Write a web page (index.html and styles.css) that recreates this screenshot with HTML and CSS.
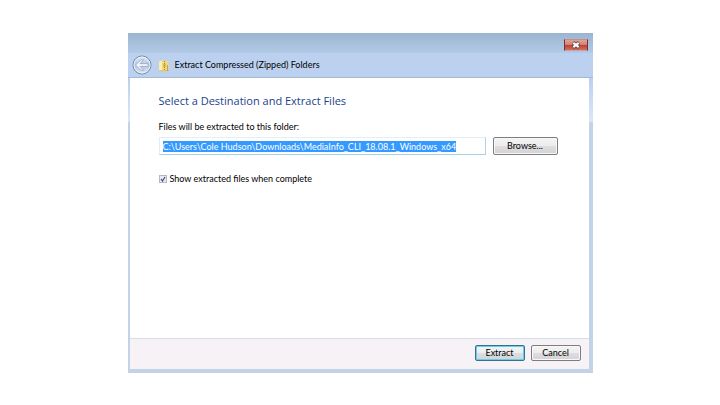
FILE: index.html
```
<!DOCTYPE html>
<html lang="en">
<head>
    <meta charset="UTF-8">
    <meta name="viewport" content="width=device-width, initial-scale=1.0">
    <title>Extract Compressed (Zipped) Folders</title>
    <link rel="stylesheet" href="styles.css">
</head>
<body>
    <form class="window" id="extractForm">
        <header class="frame-top">
            <div class="caption">
                <button type="button" class="close" aria-label="Close">
                    <svg width="10" height="8" viewBox="0 0 10 8">
                        <path d="M2 1.5 L8 6.5 M8 1.5 L2 6.5" stroke="#6b3a3a" stroke-width="3.6"/>
                        <path d="M2.3 1.8 L7.7 6.2 M7.7 1.8 L2.3 6.2" stroke="#fff" stroke-width="2.2"/>
                    </svg>
                </button>
            </div>
            <div class="nav">
                <button type="button" class="back" aria-label="Back">
                    <svg width="20" height="20" viewBox="0 0 20 20">
                        <defs>
                            <linearGradient id="ball" x1="0" y1="0" x2="0" y2="1">
                                <stop offset="0" stop-color="#e4ecf7"/>
                                <stop offset="0.5" stop-color="#b3c5e0"/>
                                <stop offset="1" stop-color="#d9e6f7"/>
                            </linearGradient>
                        </defs>
                        <circle cx="10" cy="10" r="9" fill="url(#ball)" stroke="#71849f"/>
                        <circle cx="10" cy="10" r="8" fill="none" stroke="#e9f1fb"/>
                        <path d="M3.5 10 L9 4.8 H11.6 L8 8.6 H16 V11.4 H8 L11.6 15.2 H9 Z" fill="#f1f6fc" stroke="#8c9fbe" stroke-width="0.7"/>
                    </svg>
                </button>
                <svg class="zip" width="12" height="13" viewBox="0 0 12 13">
                    <path d="M1 2.5 L5 1 L6 2 H10.5 V12 H1 Z" fill="#f3d878"/>
                    <path d="M1 2.5 L4 1.4 V12 H1 Z" fill="#fbeeb0"/>
                    <path d="M1 11.2 H11 V12.2 H1 Z" fill="#dfbf62"/>
                    <path d="M6.5 2 V12" stroke="#8d8768" stroke-dasharray="1 1"/>
                    <path d="M5.5 5 H7.5 V8 H5.5 Z" fill="#c9a548"/>
                    <path d="M9.5 6 V12" stroke="#c7a23f"/>
                </svg>
                <span class="title">Extract Compressed (Zipped) Folders</span>
            </div>
        </header>

        <main class="page">
            <h1>Select a Destination and Extract Files</h1>
            <label class="path-label" for="path">Files will be extracted to this folder:</label>
            <div class="path-row">
                <input type="text" class="path" id="path" spellcheck="false" value="C:\Users\Cole Hudson\Downloads\MediaInfo_CLI_18.08.1_Windows_x64">
                <button type="button" class="btn browse">Browse...</button>
            </div>
            <div class="option">
                <input type="checkbox" id="show" checked>
                <label for="show">Show extracted files when complete</label>
            </div>
        </main>

        <footer class="actions">
            <button type="submit" class="btn default">Extract</button>
            <button type="button" class="btn">Cancel</button>
        </footer>
    </form>

    <script>
        document.getElementById("extractForm").addEventListener("submit", function(event) {
            event.preventDefault();
        });

        // Preselect the folder so that typing replaces it
        var path = document.getElementById("path");
        path.focus();
        path.select();
    </script>
</body>
</html>
```

FILE: styles.css
```
* {
    box-sizing: border-box;
}

body {
    margin: 0;
    padding: 33px 32px 32px;
    min-height: 100vh;
    display: flex;
    justify-content: center;
    background-color: #fff;
    font-family: Lato, "Open Sans", sans-serif;
    font-size: 9px;
    line-height: 12px;
    color: #000;
}

input, button {
    font: inherit;
    color: inherit;
    margin: 0;
}

.window {
    width: 100%;
    max-width: 465px;
    display: flex;
    flex-direction: column;
    padding: 0 4px 4px 2px;
    background: linear-gradient(#bcd1ef 0, #bcd1ef 46px, #dce6f5 88px, #c3d3e7 90px);
}

/* Title bar */
.frame-top {
    margin: 0 -4px 0 -2px;
    border-bottom: 1px solid #a5b9d2;
}

.caption {
    height: 20px;
    padding: 6px 5px 0 0;
    display: flex;
    justify-content: flex-end;
    align-items: flex-start;
    background: linear-gradient(#9bb5d1, #b2cae6);
}

.close {
    width: 24px;
    height: 12px;
    padding: 0;
    display: flex;
    justify-content: center;
    align-items: center;
    border: 1px solid #7a3038;
    border-top-color: #c58c8c;
    border-bottom-color: #c9a0a8;
    background: linear-gradient(#e0a298, #d58376 45%, #b9402e 50%, #d0705f);
}

.nav {
    height: 24px;
    padding: 0 4px;
    display: flex;
    align-items: center;
}

.back {
    width: 20px;
    height: 20px;
    padding: 0;
    border: none;
    background: none;
}

.zip {
    margin: 0 5px 0 6px;
}

/* Wizard page */
.page {
    flex: 1;
    padding: 15px 31px 0 29px;
    background-color: #fff;
}

h1 {
    margin: 0 0 12px;
    font-family: "Open Sans", sans-serif;
    font-size: 11px;
    font-weight: normal;
    line-height: 16px;
    color: #1c3f8c;
}

.path-label {
    display: block;
    margin-bottom: 4px;
}

.path-row {
    display: flex;
    gap: 7px;
}

.path {
    flex: 1;
    min-width: 0;
    height: 18px;
    padding: 0 3px;
    border: 1px solid #e4edf4;
    border-right-color: #b5cfe7;
    border-bottom-color: #a8d3e2;
    background-color: #fff;
    outline: none;
}

.path::selection {
    background-color: rgba(51, 153, 255, 0.99);
    color: #fff;
}

.option {
    display: flex;
    align-items: center;
    gap: 3px;
    margin-top: 18px;
}

.option input {
    appearance: none;
    width: 8px;
    height: 8px;
    border: 1px solid #b4b8c2;
    background: #e9ebf2 url("data:image/svg+xml,%3Csvg xmlns='http://www.w3.org/2000/svg' viewBox='0 0 6 6'%3E%3Cpath d='M1 3 L2.5 5 L5 1' fill='none' stroke='%233a4a86' stroke-width='1.2'/%3E%3C/svg%3E") center / 6px 6px;
}

/* Buttons */
.btn {
    width: 50px;
    height: 16px;
    padding: 0;
    border: 1px solid #7d7d7f;
    border-radius: 2px;
    line-height: 12px;
    background: linear-gradient(#f4f4f4, #ececee 50%, #dedee0 50%, #d3d3d6);
    box-shadow: inset 0 0 0 1px #f8f8f8;
}

.browse {
    width: 65px;
    height: 18px;
}

.default {
    border-color: #37718f;
    box-shadow: inset 0 0 0 1px #5fd0ee;
}

.actions {
    display: flex;
    justify-content: flex-end;
    gap: 6px;
    padding: 6px 8px 8px;
    border-top: 1px solid #d5dcea;
    background-color: #f6f2f6;
}
```
